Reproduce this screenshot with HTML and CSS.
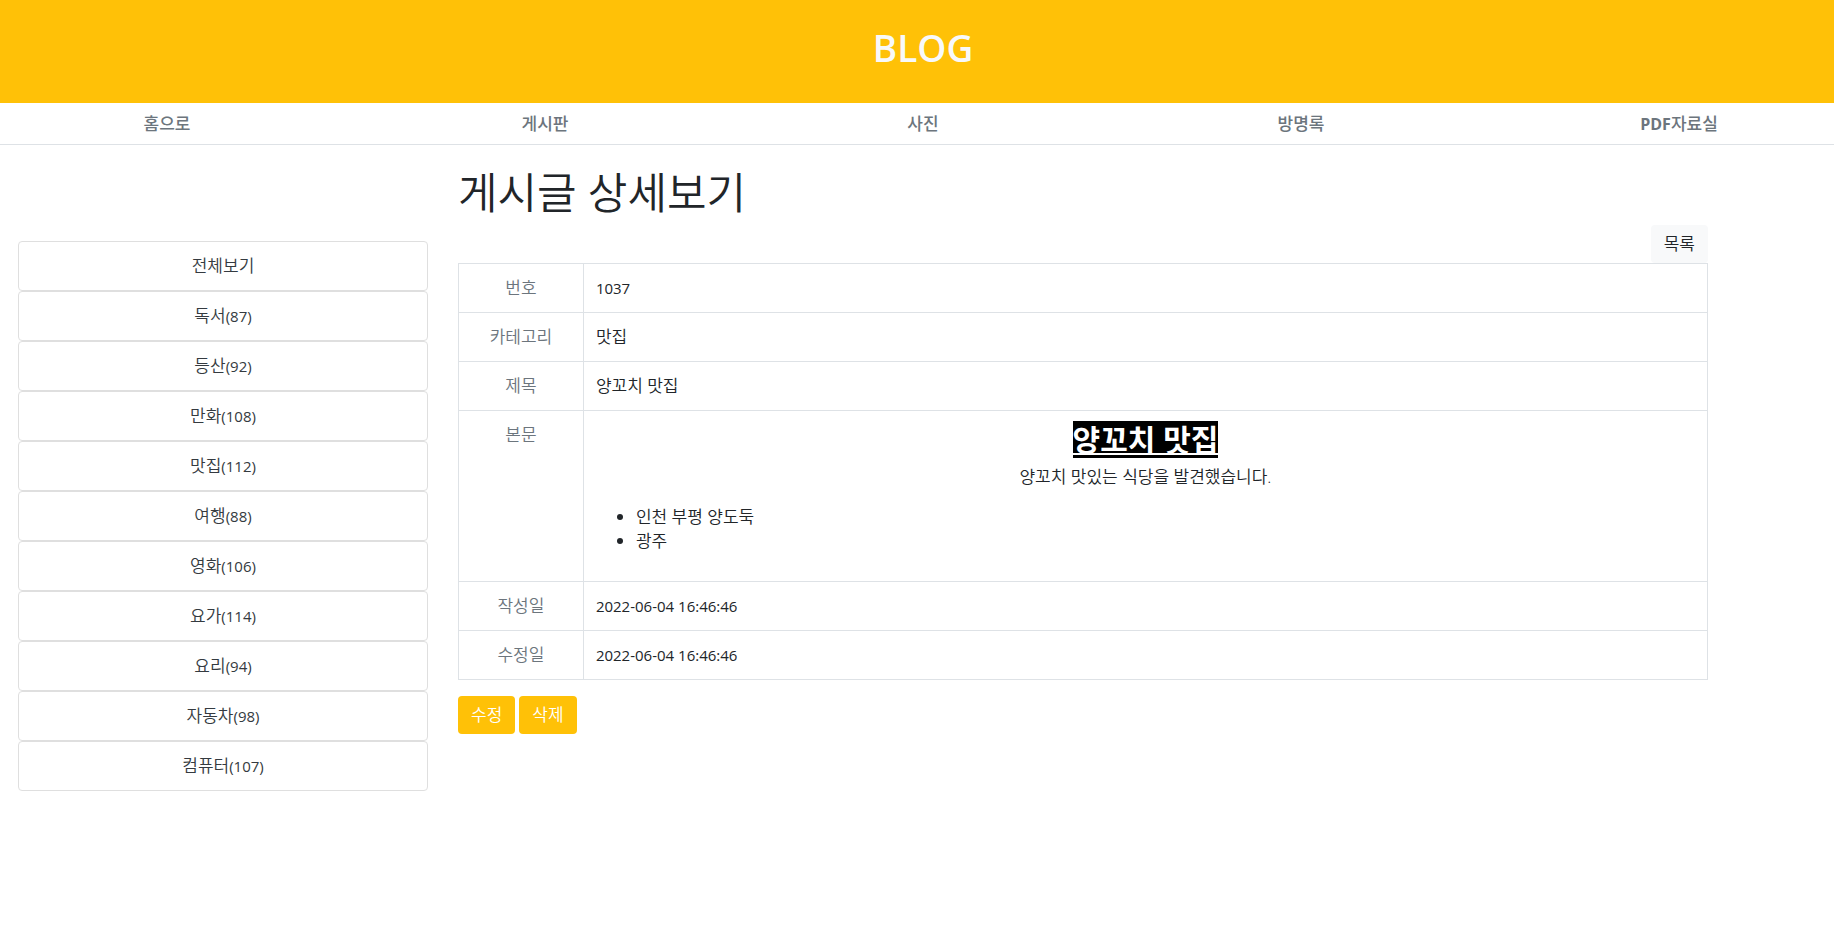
FILE: index.html
```html
<!DOCTYPE html>
<html lang="ko">
<head>
<meta charset="utf-8">
<meta name="viewport" content="width=device-width, initial-scale=1">
<title>BLOG</title>
<link rel="stylesheet" href="styles.css">
</head>
<body>
<header class="banner"><h1 class="brand">BLOG</h1></header>
<nav class="menu">
  <a href="#">홈으로</a>
  <a href="#">게시판</a>
  <a href="#">사진</a>
  <a href="#">방명록</a>
  <a href="#"><span class="latin">PDF</span>자료실</a>
</nav>
<div class="layout">
  <aside class="categories">
    <a class="all" href="#">전체보기</a>
    <a href="#">독서<span class="count">(87)</span></a>
    <a href="#">등산<span class="count">(92)</span></a>
    <a href="#">만화<span class="count">(108)</span></a>
    <a href="#">맛집<span class="count">(112)</span></a>
    <a href="#">여행<span class="count">(88)</span></a>
    <a href="#">영화<span class="count">(106)</span></a>
    <a href="#">요가<span class="count">(114)</span></a>
    <a href="#">요리<span class="count">(94)</span></a>
    <a href="#">자동차<span class="count">(98)</span></a>
    <a href="#">컴퓨터<span class="count">(107)</span></a>
  </aside>
  <main class="post">
    <h2 class="page-title">게시글 상세보기</h2>
    <div class="toolbar"><a class="btn btn-light" href="#">목록</a></div>
    <table class="detail">
      <tbody>
        <tr><th scope="row">번호</th><td class="latin">1037</td></tr>
        <tr><th scope="row">카테고리</th><td>맛집</td></tr>
        <tr><th scope="row">제목</th><td>양꼬치 맛집</td></tr>
        <tr>
          <th scope="row">본문</th>
          <td class="content">
            <h3 class="content-title"><span class="mark">양꼬치 맛집</span></h3>
            <p class="lead">양꼬치 맛있는 식당을 발견했습니다.</p>
            <ul class="places">
              <li>인천 부평 양도둑</li>
              <li>광주</li>
            </ul>
          </td>
        </tr>
        <tr><th scope="row">작성일</th><td class="latin">2022-06-04 16:46:46</td></tr>
        <tr><th scope="row">수정일</th><td class="latin">2022-06-04 16:46:46</td></tr>
      </tbody>
    </table>
    <div class="actions">
      <a class="btn btn-warning" href="#">수정</a>
      <a class="btn btn-warning" href="#">삭제</a>
    </div>
  </main>
</div>
</body>
</html>
```
FILE: styles.css
```css
*, *::before, *::after { box-sizing: border-box; }

body {
  margin: 0;
  background: #fff;
  color: #212529;
  font-family: "Open Sans", "Noto Sans CJK KR", sans-serif;
  font-size: 17px;
  font-weight: 350;
  line-height: 24px;
}

a { color: inherit; text-decoration: none; }

.latin,
.count { font-size: 15px; font-weight: 400; }

.banner {
  padding: 24px 0 31px 12px;
  background: #ffc107;
  text-align: center;
}

.brand {
  margin: 0;
  color: #f8f9fa;
  font-size: 37px;
  font-weight: 600;
  line-height: 48px;
}

.menu {
  display: flex;
  justify-content: space-between;
  padding: 9px 89px 8px 101px;
  border-bottom: 1px solid #dee2e6;
  color: #6c757d;
  font-weight: 500;
  text-align: center;
}

.menu a { width: 132px; }
.menu .latin { font-size: 16px; font-weight: 700; }

.layout {
  display: grid;
  grid-template-columns: 410fr 1250fr;
  column-gap: 30px;
  align-items: start;
  padding: 24px 126px 24px 18px;
}

.categories {
  display: flex;
  flex-direction: column;
  margin-top: 72px;
}

.categories a {
  padding: 12px 20px;
  border: 1px solid #dfdfdf;
  border-radius: 4px;
  color: #343a40;
  text-align: center;
}

.page-title {
  margin: 0 0 8px;
  font-size: 43px;
  font-weight: 350;
  line-height: 48px;
}

.toolbar { display: flex; justify-content: flex-end; }

.btn {
  padding: 6px 12px;
  border: 1px solid transparent;
  border-radius: 4px;
}

.btn-light { background: #f8f9fa; }
.btn-warning { background: #ffc107; color: #fff; }

.detail {
  width: 100%;
  border-collapse: collapse;
  margin-bottom: 16px;
}

.detail th,
.detail td {
  padding: 12px;
  border: 1px solid #dee2e6;
  text-align: left;
  vertical-align: top;
}

.detail th {
  width: 10%;
  color: #6c757d;
  font-weight: 350;
  text-align: center;
}

.detail .content { padding-top: 10px; }

.content-title {
  display: flex;
  justify-content: center;
  margin: 0 0 7px;
  font-size: 30px;
  font-weight: 700;
  line-height: 37px;
}

.mark {
  background: #000;
  color: #fff;
  text-decoration: underline;
  text-decoration-thickness: 2px;
  text-decoration-skip-ink: none;
  text-underline-offset: 2px;
}

.lead { margin: 0 0 16px; text-align: center; }
.places { margin: 0 0 16px; padding-left: 40px; }

.actions { display: flex; gap: 4px; }
```
